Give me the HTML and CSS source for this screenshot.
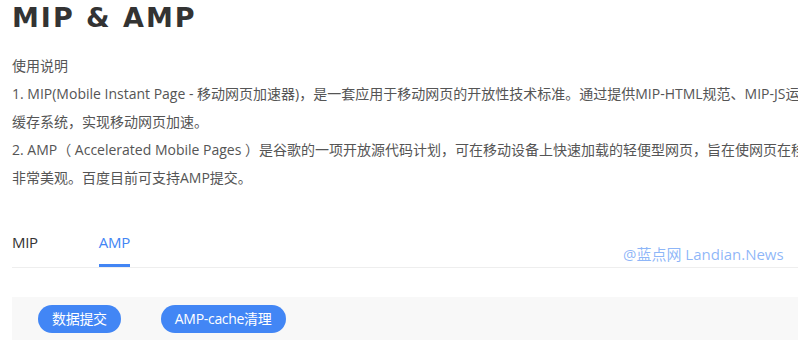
FILE: index.html
```html
<!DOCTYPE html>
<html lang="zh-CN">
<head>
<meta charset="utf-8">
<title>MIP &amp; AMP</title>
<link rel="stylesheet" href="styles.css">
</head>
<body>
<div class="page">
  <h1 class="title">MIP &amp; AMP</h1>
  <div class="desc">
    <div class="line">使用说明</div>
    <div class="line">1. MIP(Mobile Instant Page - 移动网页加速器)，是一套应用于移动网页的开放性技术标准。通过提供MIP-HTML规范、MIP-JS运行环境以及MIP-Cache页面</div>
    <div class="line">缓存系统，实现移动网页加速。</div>
    <div class="line">2. AMP（ Accelerated Mobile Pages ）是谷歌的一项开放源代码计划，可在移动设备上快速加载的轻便型网页，旨在使网页在移动设备上快速加载并且看起来</div>
    <div class="line">非常美观。百度目前可支持AMP提交。</div>
  </div>
  <div class="tabs">
    <div class="tab">MIP</div>
    <div class="tab active">AMP</div>
  </div>
  <div class="toolbar">
    <button class="btn">数据提交</button>
    <button class="btn">AMP-cache清理</button>
  </div>
</div>
<div class="watermark">@蓝点网 Landian.News</div>
</body>
</html>
```
FILE: styles.css
```css
html, body {
  margin: 0;
  padding: 0;
  background: #fff;
  overflow: hidden;
}
body {
  width: 798px;
  height: 358px;
  position: relative;
  font-family: "Open Sans", "Noto Sans CJK SC", sans-serif;
}
.page {
  width: 1100px;
  padding-left: 12px;
}
.title {
  margin: 0;
  font-family: "DejaVu Sans", sans-serif;
  font-weight: bold;
  font-size: 27px;
  line-height: 36px;
  letter-spacing: 2px;
  color: #333;
}
.desc {
  margin-top: 16px;
  font-size: 14px;
  line-height: 28px;
  color: #555;
}
.line {
  white-space: nowrap;
}
.tabs {
  display: flex;
  gap: 61px;
  margin-top: 40px;
  border-bottom: 1px solid #eeeeee;
}
.tab {
  font-size: 15px;
  line-height: 20px;
  padding-bottom: 12px;
  border-bottom: 3px solid transparent;
  color: #333;
  letter-spacing: -0.3px;
}
.tab.active {
  color: #4285f4;
  border-bottom-color: #4285f4;
}
.toolbar {
  margin-top: 29px;
  background: #f8f8f8;
  height: 43px;
  display: flex;
  align-items: center;
  gap: 40px;
  padding-left: 26px;
}
.btn {
  border: none;
  background: #4286f5;
  color: #fff;
  font-family: "Open Sans", "Noto Sans CJK SC", sans-serif;
  font-size: 14px;
  height: 28px;
  line-height: 28px;
  padding: 0 14px;
  border-radius: 14px;
  letter-spacing: -0.3px;
}
.watermark {
  position: absolute;
  left: 623px;
  top: 244px;
  font-size: 15px;
  line-height: 20px;
  color: rgba(66, 133, 244, 0.6);
  font-family: "Open Sans", "Noto Sans CJK SC", sans-serif;
  white-space: nowrap;
}
```
